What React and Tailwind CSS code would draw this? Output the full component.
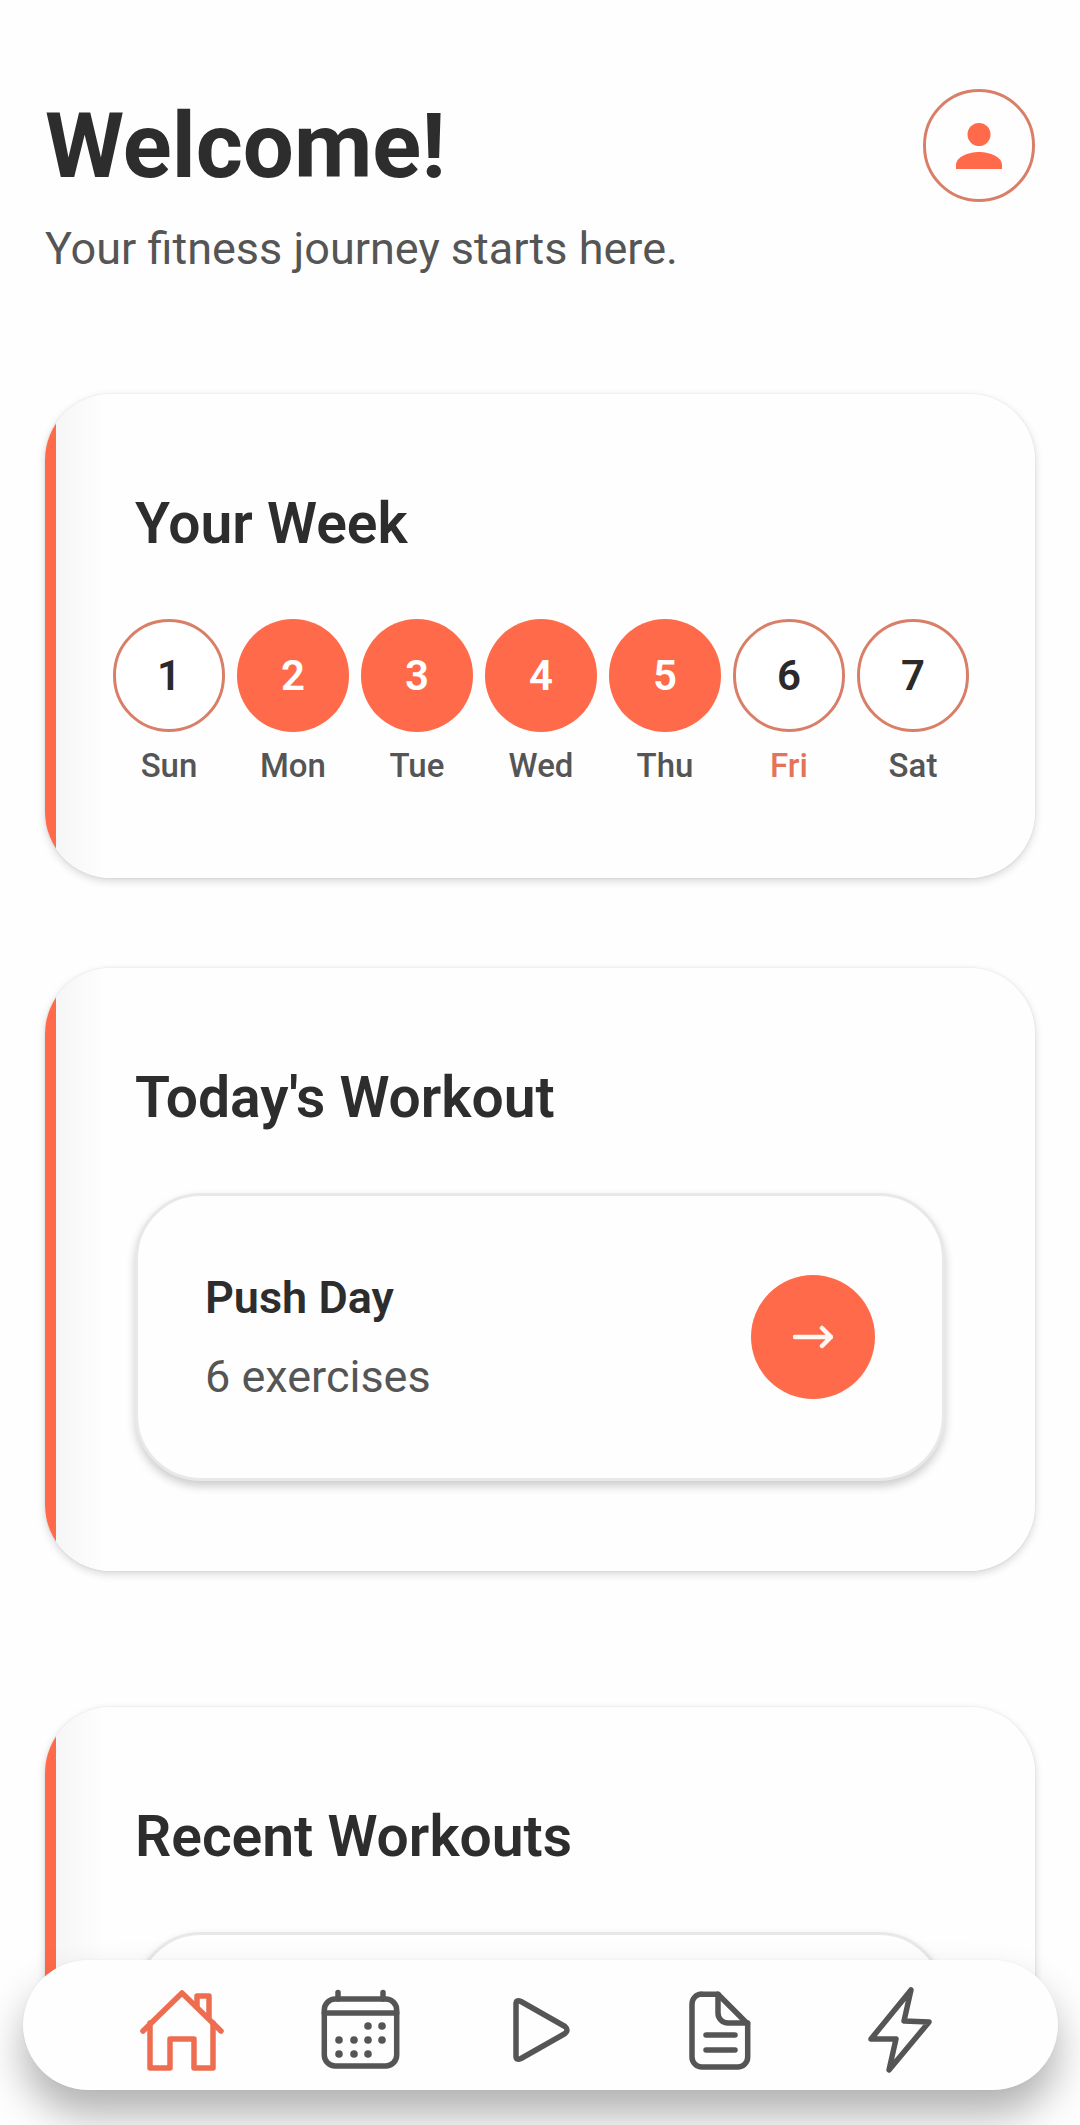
const CORAL = '#ff6b4a';

const days = [
  { num: 1, label: 'Sun', done: false },
  { num: 2, label: 'Mon', done: true },
  { num: 3, label: 'Tue', done: true },
  { num: 4, label: 'Wed', done: true },
  { num: 5, label: 'Thu', done: true },
  { num: 6, label: 'Fri', done: false, today: true },
  { num: 7, label: 'Sat', done: false },
];

function Card({ title, className, children }) {
  return (
    <section
      className={`rounded-[66px] bg-[linear-gradient(90deg,#ff6b4a_11px,#f6f6f6_11px,#fefefe_60px)] shadow-[0_3px_8px_rgba(0,0,0,0.16),0_0_2px_rgba(0,0,0,0.1)] ${className}`}
    >
      <h2 className="pl-[90px] text-[57px] leading-[66px] font-semibold text-[#2d2d2d]">{title}</h2>
      {children}
    </section>
  );
}

function DayColumn({ num, label, done, today }) {
  return (
    <div className="flex w-[112px] flex-col items-center">
      <div
        className={`flex h-[113px] w-[112px] items-center justify-center rounded-full text-[42px] font-semibold ${
          done ? 'bg-[#ff6b4a] text-white' : 'border-[3px] border-[#d97f68] bg-white text-[#2a2a2a]'
        }`}
      >
        {num}
      </div>
      <span className={`mt-[15px] text-[33px] leading-[38px] font-medium ${today ? 'text-[#e4735a]' : 'text-[#555555]'}`}>
        {label}
      </span>
    </div>
  );
}

function BottomNav() {
  const grey = '#555555';
  return (
    <nav className="absolute top-[1960px] left-[23px] h-[130px] w-[1035px] rounded-[65px] bg-[#fefefe] shadow-[0_25px_40px_rgba(0,0,0,0.3),0_0_2px_rgba(0,0,0,0.06)]">
      <div className="flex h-full items-center pt-[10px] pl-[114px]">
        <svg width="90" height="84" viewBox="0 0 90 84" fill="none" stroke="#ee6d50" strokeWidth="5.5" strokeLinecap="round" strokeLinejoin="round" className="mt-[2px]">
          <path d="M6 42 L45 4 L84 42" />
          <path d="M13 34 V79 H33 V50 H57 V79 H76 V34" />
          <path d="M60 17 V7 H72 V29" />
        </svg>
        <svg width="85" height="83" viewBox="0 0 85 83" fill="none" stroke={grey} strokeWidth="5.5" strokeLinecap="round" className="ml-[91px]">
          <rect x="6.3" y="10" width="72.4" height="67" rx="11" />
          <path d="M20 3.5 V10 M65 3.5 V10 M6.3 24 H78.7" />
          <g fill={grey} stroke="none">
            <circle cx="50" cy="37" r="3.8" />
            <circle cx="64" cy="37" r="3.8" />
            <circle cx="21" cy="51" r="3.8" />
            <circle cx="36" cy="51" r="3.8" />
            <circle cx="50" cy="51" r="3.8" />
            <circle cx="64" cy="51" r="3.8" />
            <circle cx="21" cy="65" r="3.8" />
            <circle cx="36" cy="65" r="3.8" />
            <circle cx="50" cy="65" r="3.8" />
          </g>
        </svg>
        <svg width="65" height="74" viewBox="0 0 65 74" fill="none" stroke={grey} strokeWidth="5.5" strokeLinejoin="round" className="ml-[104px]">
          <path d="M9 11 Q9 6 14 8.5 L58 33.5 Q62 37 58 40.5 L14 65.5 Q9 68 9 63 Z" />
        </svg>
        <svg width="68" height="85" viewBox="0 0 68 85" fill="none" stroke={grey} strokeWidth="5.5" strokeLinecap="round" strokeLinejoin="round" className="ml-[114px]">
          <path d="M16 6.3 H32 L61.7 36 V69 a10 10 0 0 1 -10 10 H16 a10 10 0 0 1 -10 -10 V16 a10 10 0 0 1 10 -10 Z" />
          <path d="M32 6.3 V25 a10 10 0 0 0 10 10 H61.7" />
          <path d="M20 47 H49 M20 62 H49" />
        </svg>
        <svg width="70" height="90" viewBox="0 0 70 90" fill="none" stroke={grey} strokeWidth="5.5" strokeLinejoin="round" className="ml-[111px]">
          <path d="M46 5 L39 36 L64 37 L24 85 L31 54 L6 54 Z" />
        </svg>
      </div>
    </nav>
  );
}

export default function App() {
  return (
    <div className="relative h-[2125px] w-[1080px] overflow-hidden bg-[#fefefe] font-['Roboto',sans-serif]">
      <main className="h-[2030px] overflow-hidden px-[45px] pt-[89px]">
        <header className="flex items-start justify-between">
          <div>
            <h1 className="mt-[3px] text-[90.5px] leading-[108px] font-bold text-[#2d2d2d]">Welcome!</h1>
            <p className="mt-[23px] text-[45px] leading-[52px] text-[#555555]">Your fitness journey starts here.</p>
          </div>
          <div className="flex h-[113px] w-[112px] items-center justify-center rounded-full border-[3px] border-[#d97f68]">
            <svg width="50" height="50" viewBox="0 0 50 50" fill={CORAL}>
              <circle cx="25" cy="13.5" r="11.5" />
              <path d="M2 48 V44 C2 36 14 31 25 31 C36 31 48 36 48 44 V48 Z" />
            </svg>
          </div>
        </header>

        <Card title="Your Week" className="mt-[119px] h-[484px] pt-[97px]">
          <div className="mt-[62px] flex gap-[12px] pl-[68px]">
            {days.map((d) => (
              <DayColumn key={d.num} {...d} />
            ))}
          </div>
        </Card>

        <Card title="Today's Workout" className="mt-[90px] h-[603px] pt-[97px]">
          <div className="mr-[90px] ml-[90px] mt-[62px] flex h-[288px] items-center justify-between rounded-[66px] border-[3px] border-[#e8e8e8] bg-[#fefefe] pr-[67px] pl-[67px] shadow-[0_5px_10px_rgba(0,0,0,0.2)]">
            <div>
              <div className="text-[45px] leading-[52px] font-semibold text-[#2d2d2d]">Push Day</div>
              <div className="mt-[27px] text-[45px] leading-[52px] text-[#555555]">6 exercises</div>
            </div>
            <button className="flex h-[124px] w-[124px] items-center justify-center rounded-full bg-[#ff6b4a]">
              <svg width="40" height="24" viewBox="0 0 40 24" fill="none" stroke="#fff7f3" strokeWidth="4.5" strokeLinecap="round" strokeLinejoin="round">
                <path d="M2 12 H38 M29 3 L38 12 L29 21" />
              </svg>
            </button>
          </div>
        </Card>

        <Card title="Recent Workouts" className="mt-[136px] h-[603px] pt-[97px]">
          <div className="mr-[90px] ml-[90px] mt-[62px] h-[288px] rounded-[66px] border-[3px] border-[#e8e8e8] bg-[#fefefe] shadow-[0_5px_10px_rgba(0,0,0,0.2)]" />
        </Card>
      </main>
      <BottomNav />
    </div>
  );
}
